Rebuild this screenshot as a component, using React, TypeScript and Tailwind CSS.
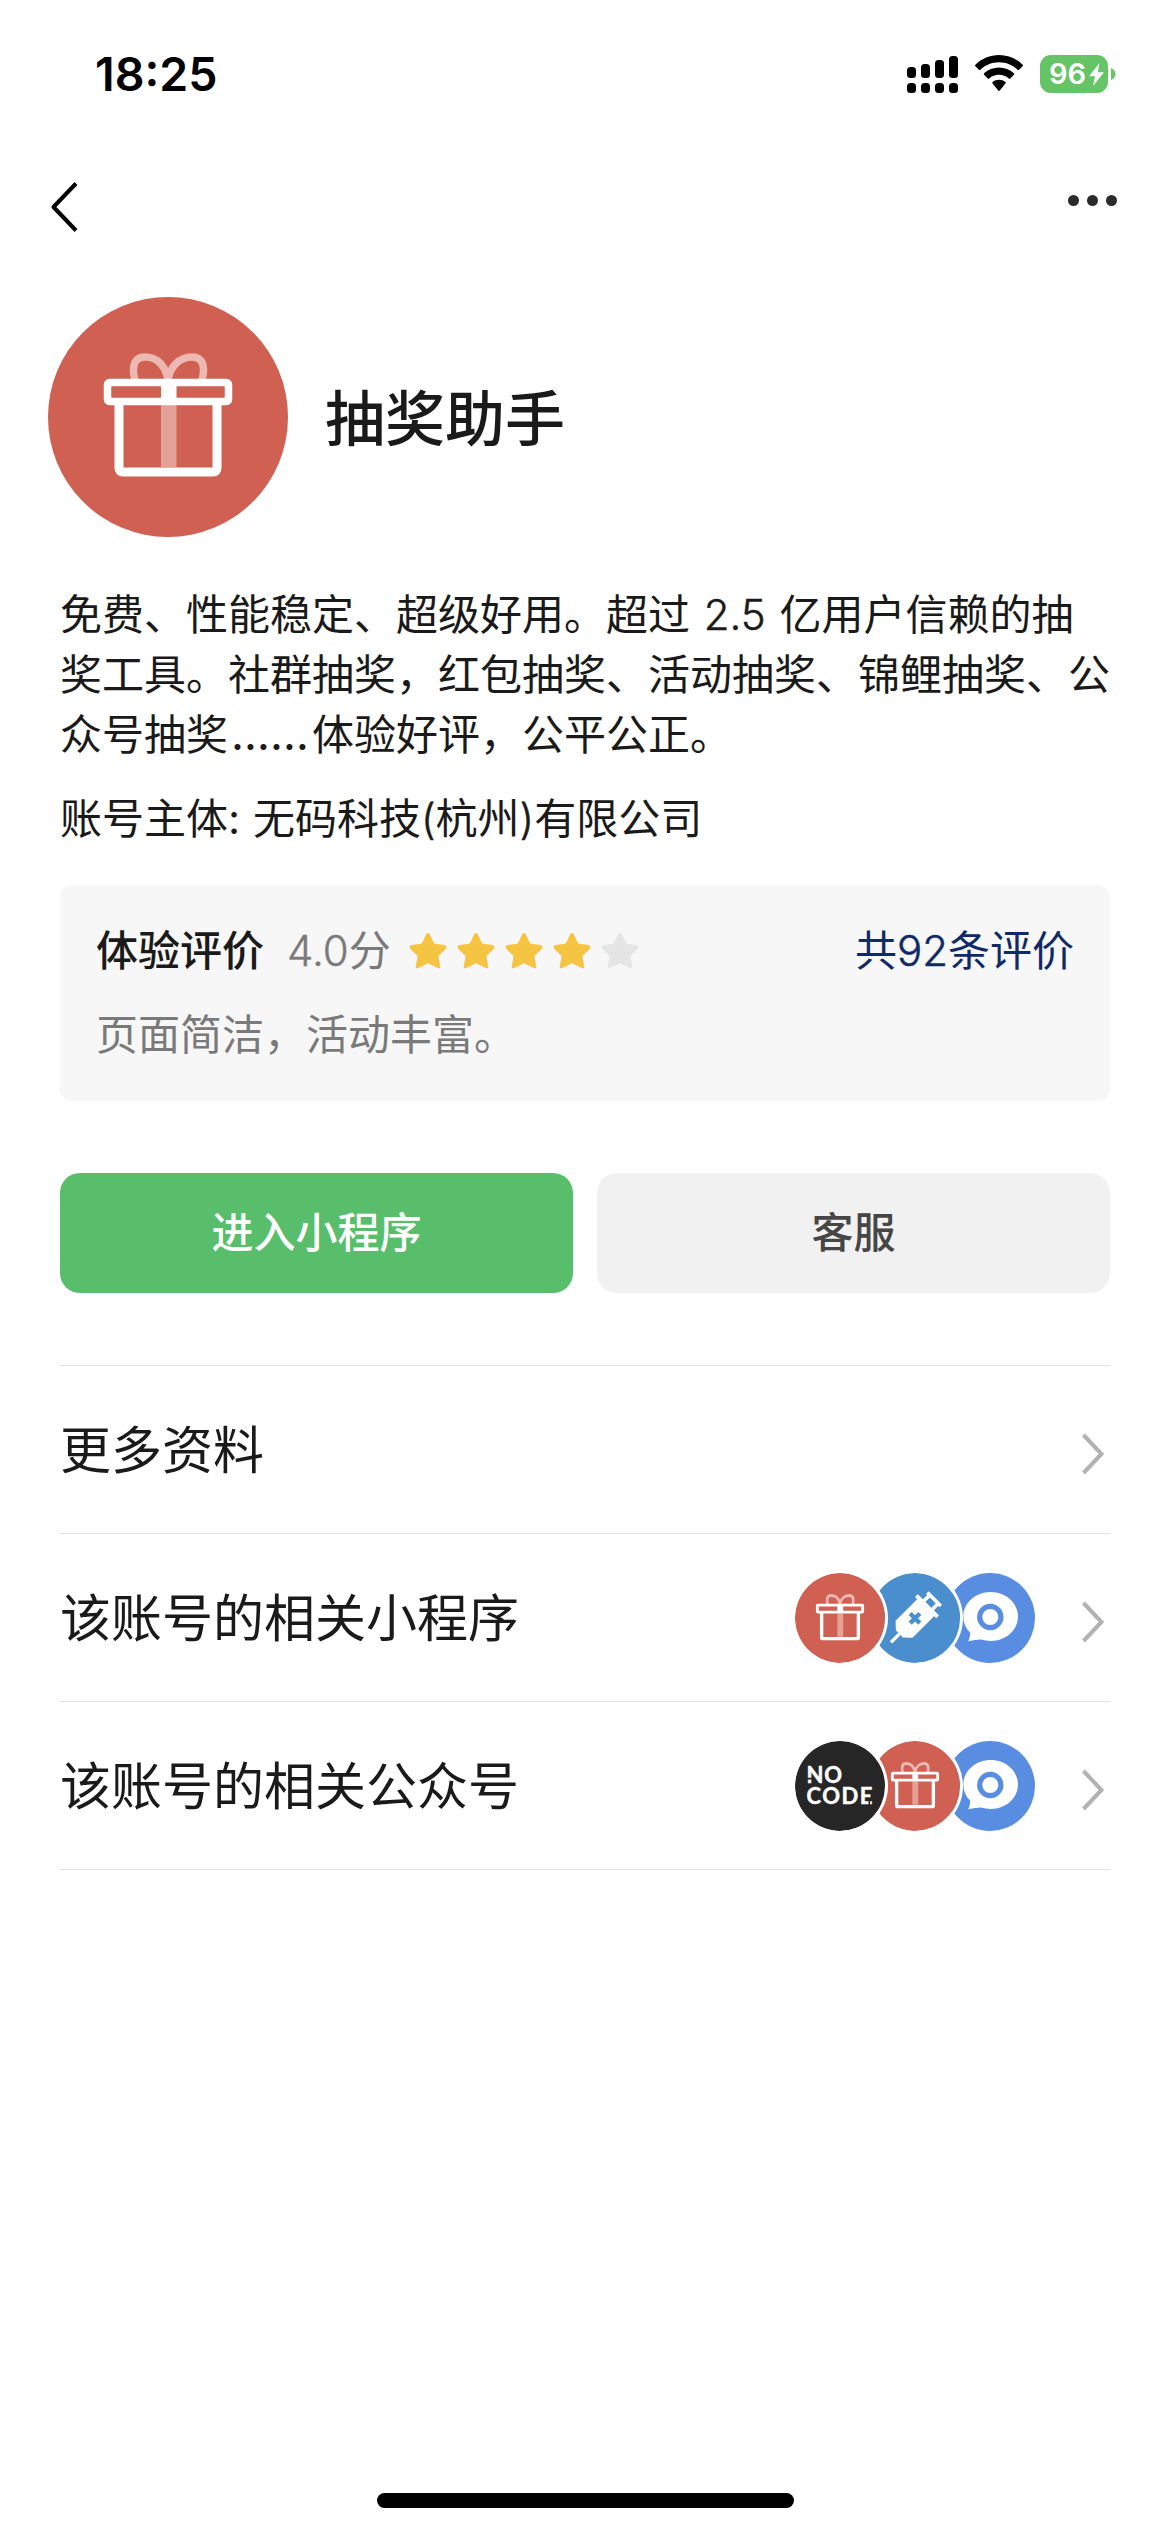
import type { ReactNode } from "react";

const STAR =
  "M19 1.2c.9 0 1.5.5 1.9 1.4l4.3 9 10 1.4c2.2.4 2.9 2.4 1.4 4l-7.2 7 1.8 10.2c.3 1.9-.9 2.8-2.6 1.9L19 31.3l-9.6 4.8c-1.7.9-2.9 0-2.6-1.9L8.6 24l-7.2-7c-1.5-1.6-.8-3.6 1.4-4l10-1.4 4.3-9c.4-.9 1-1.4 1.9-1.4Z";

function GiftIcon({ className }: { className: string }) {
  return (
    <svg viewBox="0 0 240 240" className={className}>
      <circle cx="120" cy="120" r="120" fill="#cf6052" />
      <g fill="none" stroke="#ecb8b1" strokeWidth="7.5">
        <path d="M87 83C83 68 87 60 97 60c13 0 21 10 23 23" />
        <path d="M154 83c4-15 0-23-10-23-13 0-22 10-24 23" />
      </g>
      <path d="M113 108h15.500v62H113z" fill="#e3a198" />
      <rect x="59.500" y="85.500" width="121" height="19" rx="2" fill="none" stroke="#fff" strokeWidth="7.500" />
      <path d="M113 85h15.500v20H113z" fill="#fff" />
      <path d="M71 106v65q0 4 4 4h90q4 0 4-4v-65" fill="none" stroke="#fff" strokeWidth="9" />
    </svg>
  );
}

function SyringeIcon({ className }: { className: string }) {
  return (
    <svg viewBox="0 0 90 90" className={className}>
      <circle cx="45" cy="45" r="45" fill="#4b8ecd" />
      <g transform="translate(45 45.300) rotate(-45)">
        <path d="M-15.500-12H16v24h-31.500L-22 5V-5Z" fill="#fff" />
        <path d="M-34-1.700h12v3.400h-12zM15-15h4v30h-4z" fill="#fff" />
        <path d="M18-6h9.500M18 6h9.500M27-9.500v19" fill="none" stroke="#fff" strokeWidth="3.600" />
        <path d="M-6.800 0H6.800M0-6.800V6.800" stroke="#4b8ecd" strokeWidth="4.400" />
      </g>
    </svg>
  );
}

function ChatIcon({ className }: { className: string }) {
  return (
    <svg viewBox="0 0 90 90" className={className}>
      <circle cx="45" cy="45" r="45" fill="#588de1" />
      <path
        d="M45.700 19C61 19 73 30 73 43.500S61 68 45.700 68q-5 0-9.700-1.400-6 .2-12.700 1.600 1.900-3.900 2-8.200-7-7-7-16.500C18.300 30 30.500 19 45.700 19Z"
        fill="#fff"
      />
      <circle cx="45.300" cy="44" r="10.600" fill="#fff" stroke="#588de1" strokeWidth="5.200" />
    </svg>
  );
}

function NoCodeIcon({ className }: { className: string }) {
  return (
    <svg viewBox="0 0 90 90" className={className}>
      <circle cx="45" cy="45" r="45" fill="#262626" />
      <g
        fill="#fff"
        stroke="#fff"
        strokeWidth="0.500"
        fontFamily="Lato, sans-serif"
        fontWeight="700"
        fontSize="22"
      >
        <text x="11.500" y="41.800" letterSpacing="0.800">NO</text>
        <text x="11.500" y="63.300" letterSpacing="1.500">CODE</text>
      </g>
      <path d="M11 36.700h6.500v1.800H11zM73.500 58h1.700v7h-1.700z" fill="#262626" />
    </svg>
  );
}

function StatusBar() {
  return (
    <div className="flex h-[150px] items-start justify-between pl-[95px] pr-[54px]">
      <span className="mt-[44px] text-[46.5px] font-semibold leading-[60px] text-black">18:25</span>
      <div className="mt-[55px] flex items-start">
        <svg viewBox="0 0 52 38" className="h-[38px] w-[52px]">
          <rect x="0" y="12" width="9" height="11" rx="3.500" />
          <rect x="14" y="9" width="9" height="14" rx="3.500" />
          <rect x="28" y="5" width="9" height="18" rx="3.500" />
          <rect x="42" y="1" width="9" height="22" rx="3.500" />
          <rect x="0" y="28" width="9" height="10" rx="3.500" />
          <rect x="14" y="28" width="9" height="10" rx="3.500" />
          <rect x="28" y="28" width="9" height="10" rx="3.500" />
          <rect x="42" y="28" width="9" height="10" rx="3.500" />
        </svg>
        <svg viewBox="0 0 48 37" className="ml-4 h-[37px] w-[48px]">
          <path d="M24 0c9 0 17.300 3.500 23.600 9.700.5.500.5 1 0 1.500l-3.500 3.500c-.5.500-1 .5-1.500 0C37.500 10 31 7.300 24 7.300S10.500 10 5.400 14.700c-.5.500-1 .5-1.500 0L.4 11.200c-.5-.5-.5-1 0-1.500C6.700 3.500 15 0 24 0Z" />
          <path d="M24 12.500c5.700 0 10.800 2.100 14.900 5.800.5.500.5 1 0 1.500l-3.600 3.600c-.5.500-1 .5-1.500 0-2.700-2.300-6-3.600-9.800-3.600s-7.100 1.300-9.800 3.600c-.5.500-1 .5-1.500 0l-3.600-3.600c-.5-.5-.5-1 0-1.500 4.100-3.700 9.200-5.800 14.900-5.800Z" />
          <path d="M24 24.800c2.400 0 4.600.8 6.400 2.300.5.500.5 1 0 1.500l-5.600 6.900c-.5.500-1.100.5-1.600 0l-5.600-6.900c-.5-.5-.5-1 0-1.500 1.800-1.500 4-2.300 6.400-2.300Z" />
        </svg>
        <div className="ml-[17px] flex h-[38px] w-[68px] items-center rounded-[11px] bg-[#65c466] pl-[9px]">
          <span className="w-[37px] text-[29px] font-semibold leading-[38px] text-white">96</span>
          <svg viewBox="0 0 15 23" className="ml-[3px] h-[23px] w-[15px] shrink-0" fill="#fff">
            <path d="M10.500 0 0 13.200h6L4 23 15 9.300H8.800Z" />
          </svg>
        </div>
        <svg viewBox="0 0 5 12" className="ml-[3px] mt-[13px] h-[12px] w-[5px]" fill="#65c466">
          <path d="M0 0q4.500 2 4.500 6T0 12Z" />
        </svg>
      </div>
    </div>
  );
}

function NavBar() {
  return (
    <div className="flex h-[147px] items-start justify-between pl-[49px] pr-[53px]">
      <svg viewBox="0 0 30 52" className="mt-[31px] h-[52px] w-[30px]" fill="none" stroke="#000" strokeWidth="4">
        <path d="M27 2.500 4.500 26 27 49.500" strokeLinejoin="round" />
      </svg>
      <div className="mt-[45px] flex gap-[8px]">
        <span className="size-[11px] rounded-full bg-[#2b2b2b]" />
        <span className="size-[11px] rounded-full bg-[#2b2b2b]" />
        <span className="size-[11px] rounded-full bg-[#2b2b2b]" />
      </div>
    </div>
  );
}

function Row({ label, children }: { label: string; children?: ReactNode }) {
  return (
    <div className="flex h-[168px] items-center border-b border-[#e0e0e0] pr-[5px]">
      <span className="pt-[3px] text-[51px] leading-[72px] text-[#1a1a1a]">{label}</span>
      <div className="ml-auto mr-[45px] flex">{children}</div>
      <svg viewBox="0 0 25 42" className="mt-[8px] h-[42px] w-[25px]" fill="none" stroke="#b2b2b2" strokeWidth="4">
        <path d="m3.500 2 18 19-18 19" />
      </svg>
    </div>
  );
}

export default function App() {
  const front = "relative z-20 size-[90px] rounded-full ring-3 ring-white";
  const middle = "relative z-10 -ml-[15px] size-[90px] rounded-full ring-3 ring-white";
  const back = "-ml-[15px] size-[90px]";
  return (
    <div
      lang="zh-CN"
      className="flex h-[2532px] w-[1170px] flex-col bg-white font-['Inter','Noto_Sans_CJK_SC',sans-serif] text-[#1a1a1a]"
    >
      <StatusBar />
      <NavBar />
      <div className="flex items-center pl-[48px]">
        <GiftIcon className="size-[240px]" />
        <h1 className="ml-[37px] pt-[4px] text-[60px] font-medium leading-[80px]">抽奖助手</h1>
      </div>
      <main className="mt-[48px] px-[60px]">
        <p className="whitespace-nowrap text-[42px] leading-[60px]">
          免费、性能稳定、超级好用。超过
          <span className="font-light [-webkit-text-stroke:0.5px] [word-spacing:2px]"> 2.5 </span>
          亿用户信赖的抽
          <br />
          奖工具。社群抽奖，红包抽奖、活动抽奖、锦鲤抽奖、公
          <br />
          众号抽奖
          <span className="inline-block w-[84px] text-center text-[45px] leading-[40px]">……</span>
          体验好评，公平公正。
        </p>
        <p className="mt-6 whitespace-nowrap text-[42px] leading-[60px]">
          账号主体<span className="[word-spacing:1px]">: </span>无码科技
          <span className="font-light [-webkit-text-stroke:0.5px]">(</span>杭州
          <span className="font-light [-webkit-text-stroke:0.5px]">)</span>有限公司
        </p>

        <section className="mt-9 rounded-xl bg-[#f7f7f7] p-9 text-[42px] leading-[60px]">
          <div className="flex items-center">
            <span className="font-medium">体验评价</span>
            <span className="ml-[23px] w-[103px] whitespace-nowrap text-[#7a7a7a]">
              <span className="font-light [-webkit-text-stroke:0.4px]">4.0</span>分
            </span>
            <div className="ml-[19px] flex gap-[10px]">
              {[0, 1, 2, 3, 4].map((i) => (
                <svg key={i} viewBox="0 0 38 38" className="size-[38px]" fill={i < 4 ? "#f5c443" : "#e5e5e5"}>
                  <path d={STAR} />
                </svg>
              ))}
            </div>
            <span className="ml-auto text-[#0f2a66]">
              共<span className="font-light [-webkit-text-stroke:0.5px]">92</span>条评价
            </span>
          </div>
          <p className="mt-6 text-[#7a7a7a]">页面简洁，活动丰富。</p>
        </section>

        <div className="mt-[72px] grid grid-cols-2 gap-6 text-[42px] font-medium leading-[60px]">
          <button className="h-[120px] rounded-[20px] bg-[#59be6b] text-white">进入小程序</button>
          <button className="h-[120px] rounded-[20px] bg-[#f1f1f1] text-[#464646]">客服</button>
        </div>

        <div className="mt-[72px] border-t border-[#e0e0e0]">
          <Row label="更多资料" />
          <Row label="该账号的相关小程序">
            <GiftIcon className={front} />
            <SyringeIcon className={middle} />
            <ChatIcon className={back} />
          </Row>
          <Row label="该账号的相关公众号">
            <NoCodeIcon className={front} />
            <GiftIcon className={middle} />
            <ChatIcon className={back} />
          </Row>
        </div>
      </main>
      <div className="mx-auto mb-6 mt-auto h-[15px] w-[417px] rounded-full bg-black" />
    </div>
  );
}
